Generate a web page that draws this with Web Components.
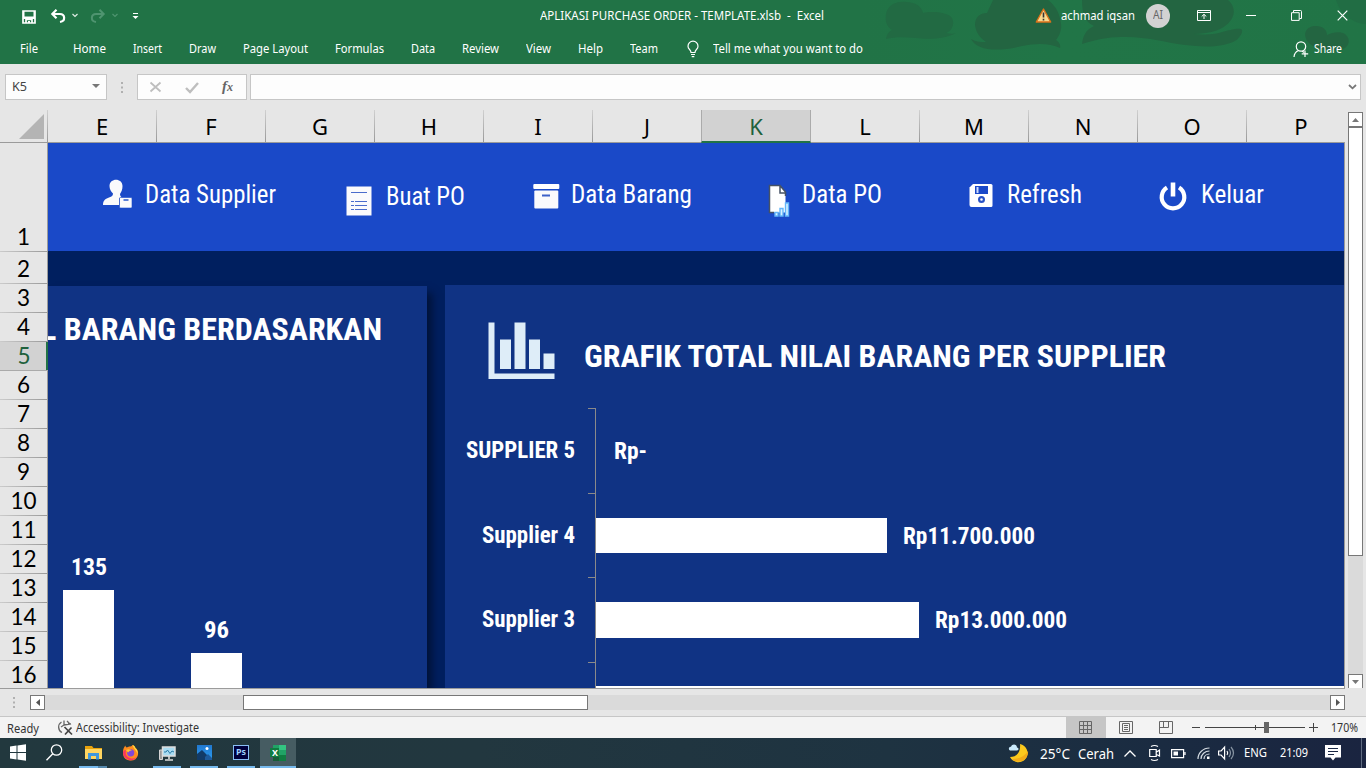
<!DOCTYPE html>
<html lang="id">
<head>
<meta charset="utf-8">
<title>APLIKASI PURCHASE ORDER - TEMPLATE.xlsb - Excel</title>
<style>
html,body{margin:0;padding:0;width:1366px;height:768px;overflow:hidden;background:#e6e6e6}
body{font-family:"Noto Sans","Open Sans",sans-serif;font-size:12px}
</style>
</head>
<body>
<excel-app></excel-app>
<script>
const make = (name, html, setup) => customElements.define(name, class extends HTMLElement {
  connectedCallback() {
    if (this.shadowRoot) return;
    const t = document.createElement('template');
    t.innerHTML = '<style>*{box-sizing:border-box}svg{display:block;overflow:visible;flex:none}</style>' + html;
    this.attachShadow({mode: 'open'}).append(t.content.cloneNode(true));
    if (setup) setup.call(this, this.shadowRoot);
  }
});

/* Single line of text condensed or widened to the width given by "w". */
make('fit-text', `<style>:host{display:block;white-space:nowrap;line-height:1.2;flex:none}
  span{display:inline-block;transform-origin:0 50%;vertical-align:top}</style><span><slot></slot></span>`,
  function (root) {
    const w = +this.getAttribute('w'), s = root.querySelector('span');
    this.style.width = w + 'px';
    s.style.transform = `scaleX(${w / s.getBoundingClientRect().width})`;
  });

/* Grid row whose column starts are listed in "cols". */
make('track-row', `<style>:host{display:grid;align-items:center;justify-items:start;height:100%}</style><slot></slot>`,
  function () {
    const c = this.getAttribute('cols').split(' ').map(Number);
    this.style.paddingLeft = c[0] + 'px';
    this.style.gridTemplateColumns = c.slice(1).map((v, i) => v - c[i] + 'px').join(' ') + ' 1fr';
  });

make('title-bar', `<style>
  :host{display:grid;grid-template-rows:31px 33px;height:64px;background:#217346;color:#fff;position:relative;overflow:hidden}
  .art{position:absolute;left:860px;top:0}
  .tabs{padding-top:3px;position:relative;height:33px}.top{position:relative}
  fit-text{font-size:12.4px}
  .top fit-text{margin-top:2px}
  .tabs fit-text{margin-top:1px}
  .av{width:24px;height:24px;border-radius:50%;background:#d2d2d2;display:grid;place-items:center;color:#666}
  .top .av fit-text{font-size:12px;margin-top:-1px}
</style>
<svg class="art" width="506" height="64" viewBox="0 0 506 64"><defs><linearGradient id="f"><stop offset="0" stop-color="#217346"/><stop offset=".4" stop-color="#217547"/><stop offset="1" stop-color="#217446"/></linearGradient></defs>
 <rect width="506" height="64" fill="url(#f)"/>
 <path d="M26 39C27 33 30 31 32 30 26 26 25 20 26 14 28 5 36 1 46 2c10 0 16 5 17 11 8-2 25-1 29 5 3 6 0 13-6 15 4 1 8 1 10 0-12 7-30 6-40 5-12-1-22-1-30 1z" fill="#226a43"/>
 <g fill="#236541"><path d="M111 39c5 3 10 3 15 3C119 37 116 32 115 25c0-8 5-12 12-12L133 0h55c8 6 12 14 13 24 1 6-2 12-5 16 3 2 5 5 4 8-10-5-24-5-38-2-24 6-45 5-51-7z"/>
 <path d="M222 0h146c6 5 8 13 3 20-6 9-20 14-38 14 12 1 22 0 26-1 10-3 18-5 22-4 3 1 0 8-6 12-14 7-32 6-50 4-22-3-40-9-64-8-14 0-26 3-39 7 1-7 3-14 12-18-9-4-12-12-12-26z"/>
 <path d="M448 42C442 34 446 26 456 26c7 0 11 4 11 9 5-3 14-4 18-1 7 6 3 13-2 15-10 3-28 1-35-7z"/></g>
 <path d="M476 0h30v24c-12 0-26-10-30-24z" fill="#216d44"/></svg>
<div class="top"><track-row cols="22 51 72 90 112 132 540 1035 1061 1146 1197 1246 1291 1337">
 <svg width="14" height="14" viewBox="0 0 14 14" style="margin-top:3px"><path d="M1 1h12v12H1z M4 13V9.500h6V13" fill="none" stroke="#fff" stroke-width="1.700"/><path d="M1 6.500h12v2.500H1zM1 1h1.500v6H1zM11.500 1H13v6h-1.500zM6 11h2v2H6z" fill="#fff"/></svg>
 <svg width="15" height="15" viewBox="0 0 15 15" style="margin-top:1px"><path d="M1 5h8c5 0 6 7 0 8M5.500.7L1.300 5l4.200 4.300" fill="none" stroke="#fff" stroke-width="2.200"/></svg>
 <svg width="6" height="5" viewBox="0 0 6 5"><path d="M.5 1L3 3.500 5.500 1" fill="none" stroke="#e0ece5" stroke-width="1.200"/></svg>
 <svg width="15" height="15" viewBox="0 0 15 15" style="margin-top:1px"><path d="M14 5H6C1 5 0 12 6 13M9.500.7L13.700 5 9.500 9.300" fill="none" stroke="#4f9470" stroke-width="2"/></svg>
 <svg width="6" height="5" viewBox="0 0 6 5"><path d="M.5 1L3 3.500 5.500 1" fill="none" stroke="#4f9470" stroke-width="1.200"/></svg>
 <svg width="7" height="7" viewBox="0 0 7 7" style="margin-top:2px"><path d="M1 .5h5" stroke="#fff"/><path d="M.5 3h6L3.500 6z" fill="#fff"/></svg>
 <fit-text w="284" style="white-space:pre">APLIKASI PURCHASE ORDER - TEMPLATE.xlsb  -  Excel</fit-text>
 <svg width="17" height="15" viewBox="0 0 17 15"><path d="M8.500 1L15.700 14H1.300z" fill="#f9d98e" stroke="#d9701a" stroke-width="1.400" stroke-linejoin="round"/><path d="M8.500 4.500v5M8.500 10.800v1.700" stroke="#333" stroke-width="1.600"/></svg>
 <fit-text w="74">achmad iqsan</fit-text>
 <div class="av"><fit-text w="10">AI</fit-text></div>
 <svg width="14" height="11" viewBox="0 0 14 11"><path d="M.5.5h13v10H.5zM.5 2.500h13M7 9V4.500M4.700 6.500L7 4.300l2.300 2.200" fill="none" stroke="#fff"/></svg>
 <svg width="10" height="3" style="margin-top:-1px"><path d="M0 1.500h10" stroke="#fff"/></svg>
 <svg width="11" height="11" viewBox="0 0 11 11"><path d="M.5 2.700h7.700v7.700H.5zM2.500 2.500v-2h7q1 0 1 1v7h-2" fill="none" stroke="#fff"/></svg>
 <svg width="11" height="11" viewBox="0 0 11 11"><path d="M.7.7l9.600 9.600M10.300.7L.7 10.300" stroke="#fff" stroke-width="1.200"/></svg>
</track-row></div>
<div class="tabs"><track-row cols="20 73 133 189 243 335 411 462 526 578 630 687 713 1293 1314">
 <fit-text w="18">File</fit-text><fit-text w="33">Home</fit-text><fit-text w="29">Insert</fit-text><fit-text w="27">Draw</fit-text><fit-text w="65">Page Layout</fit-text><fit-text w="49">Formulas</fit-text><fit-text w="24">Data</fit-text><fit-text w="37">Review</fit-text><fit-text w="25">View</fit-text><fit-text w="25">Help</fit-text><fit-text w="28">Team</fit-text>
 <svg width="12" height="17" viewBox="0 0 12 17"><path d="M4 11.500C4 8.500 1 8.500 1 5.200a5 5 0 0 1 10 0C11 8.500 8 8.500 8 11.500zM4 13.500h4M4.700 15.700h2.600" fill="none" stroke="#fff" stroke-width="1.200"/></svg>
 <fit-text w="150">Tell me what you want to do</fit-text>
 <svg width="16" height="17" viewBox="0 0 16 17"><circle cx="8" cy="5.500" r="4.700" fill="none" stroke="#fff" stroke-width="1.200"/><path d="M1 16c.3-4 2-5.500 4.500-6.500M9 10l2 1.500M12 9.500v6.500M8.700 12.800h6.500" fill="none" stroke="#fff" stroke-width="1.200"/></svg>
 <fit-text w="28">Share</fit-text>
</track-row></div>`);

make('formula-bar', `<style>
  :host{display:grid;grid-template-columns:102px 30px 110px 3px 1111px;padding:10px 5px;height:46px;background:#e6e6e6}
  .b{background:#fdfdfd;border:1px solid #c6c6c6;height:26px}
  .n{display:flex;align-items:center;justify-content:space-between;padding:0 6px;color:#444}
  .d{display:grid;place-items:center}
  .i{font:italic bold 15px "Liberation Serif",serif;color:#666;margin-top:-2px}
  .i span{font-size:12px}
  .e{display:flex;align-items:center;justify-content:flex-end;padding-right:3px}
</style>
<div class="b n"><fit-text w="15" style="font-size:12.4px;margin-top:1px">K5</fit-text><svg width="8" height="4" style="margin-top:-2px"><path d="M0 0h8L4 4z" fill="#777"/></svg></div>
<div class="d"><svg width="2" height="11"><path d="M0 0h2v2H0zM0 4.500h2v2H0zM0 9h2v2H0z" fill="#b0b0b0"/></svg></div>
<div class="b"><track-row cols="12 47 84"><svg width="11" height="10" viewBox="0 0 11 10"><path d="M.5.5l10 9M10.500.5l-10 9" stroke="#bebebe" stroke-width="1.800"/></svg><svg width="14" height="11" viewBox="0 0 14 11"><path d="M1 6l4 4L13 1" fill="none" stroke="#bebebe" stroke-width="2.400"/></svg><fit-text class="i" w="11">f<span>x</span></fit-text></track-row></div>
<div></div>
<div class="b e"><svg width="9" height="6" viewBox="0 0 9 6"><path d="M1 1l3.500 3.300L8 1" fill="none" stroke="#777" stroke-width="1.800"/></svg></div>`);

make('column-headers', `<style>
  :host{display:grid;grid-template-columns:47px repeat(12,109px);height:33px;overflow:hidden;font:22px "Noto Sans",sans-serif;color:#000;background:linear-gradient(#9b9b9b,#9b9b9b) 0 100%/100% 1px no-repeat #e6e6e6}
  .h{display:grid;place-items:center;height:32px;line-height:1;padding:0 0 1px 1px;background:linear-gradient(#d0d0d0,#999) 0 0/1px 100% no-repeat}
  .s{background:#d2d2d2;color:#1e613c;border:1px solid #ababab;border-width:0 1px;height:33px;border-bottom:2px solid #217346;width:110px;padding:0}
  .s+.h{background:none}
  .c{padding:4px 0 0 19px}
</style><div class="c"><svg width="25" height="25"><path d="M25 0v25H0z" fill="#b4b4b4"/></svg></div>`,
  function (root) {
    for (const l of 'EFGHIJKLMNOP') {
      const d = document.createElement('div');
      d.className = l === 'K' ? 'h s' : 'h';
      d.textContent = l;
      root.append(d);
    }
  });

make('row-headers', `<style>
  :host{display:grid;grid-template-rows:109px 32px repeat(14,29px);width:48px;height:545px;overflow:hidden;background:linear-gradient(#9b9b9b,#9b9b9b) 100% 0/1px 100% no-repeat #e6e6e6;font:22.500px Lato,"Noto Sans",sans-serif;color:#000}
  .r{display:flex;align-items:flex-end;justify-content:center;line-height:29px;border-bottom:1px solid;border-image:linear-gradient(90deg,#ccc,#999) 1;width:47px;height:100%;min-height:0}
  .r span{height:29px}
  .s{background:linear-gradient(#217346,#217346) 100% 0/2px 100% no-repeat #d2d2d2;color:#1e613c;border-image:none;border-color:#aaa;width:48px}
</style>`, function (root) {
    for (let i = 1; i < 17; i++) {
      const d = document.createElement('div');
      d.className = i === 5 ? 'r s' : 'r';
      d.innerHTML = `<span>${i}</span>`;
      root.append(d);
    }
  });

make('menu-strip', `<style>:host{display:block;height:108px;background:#1a49c8;color:#fff;font:25px Roboto,sans-serif;font-stretch:75%;overflow:hidden}
  fit-text{margin:-4px 0 0 -1px}</style>
<track-row cols="55 98 298 339 484 524 720 755 921 960 1111 1154">
 <svg width="30" height="30" viewBox="0 0 30 30" style="margin-top:-6px"><path d="M6.500 7C6.500-1.500 19.500-1.500 19.500 7c0 4-1 5.500-2.500 8 0 2 1 3 2 3.500L16 19v7H0c0-5 3-6.500 6-7.500 3-1 4-2 4-4C8 12.500 6.500 10 6.500 7z" fill="#fafafc"/><rect x="16.500" y="18.500" width="12.500" height="10.500" rx="1" fill="#fafafc" stroke="#1a49c8" stroke-width=".6"/><path d="M20.500 21h5" stroke="#5c80d8" stroke-width="2"/></svg>
 <fit-text w="131">Data Supplier</fit-text>
 <svg width="26" height="30" viewBox="0 0 26 30" style="margin-top:8px"><path d="M.5.5h25v29H.5z" fill="#fafafc"/><path d="M5 6.500h16M9 15.500h12M9 19.500h12M9 23.500h12M5 15.500h3M5 19.500h3M5 23.500h3" stroke="#4a6ccc" stroke-width="1.200"/></svg>
 <fit-text w="79" style="margin-top:0">Buat PO</fit-text>
 <svg width="27" height="25" viewBox="0 0 27 25" style="margin-top:-1px;margin-left:1px"><rect x=".3" width="26" height="5" rx="1" fill="#fff"/><rect x="1.300" y="6.500" width="24" height="18" rx="1" fill="#fafafc"/><path d="M9 11.500h8" stroke="#3d61c8" stroke-width="2"/></svg>
 <fit-text w="121">Data Barang</fit-text>
 <svg width="22" height="33" viewBox="0 0 22 33" style="margin-top:6px"><path d="M1.500 1.500H12l5.500 6.500v20.500h-16z" fill="#fff"/><path d="M1.500 29V1.500H12l5.500 6.500v4M12 1.500V9h6M1 28.500h5" fill="none" stroke="#455265" stroke-width="1.500"/><g fill="#d8f0ff" stroke="#63b6fa" stroke-width="1.400"><path d="M7 28.500h3v3.500H7zM12 24.500h3V32h-3zM17.500 19h3v13h-3z"/></g></svg>
 <fit-text w="80">Data PO</fit-text>
 <svg width="25" height="25" viewBox="0 0 25 25" style="margin-top:-3px"><path d="M4 1h18q1.500 0 1.500 1.500v20Q23.500 24 22 24H2.500Q.500 24 .500 22V4.500z" fill="#fff"/><path d="M6 3h13v8H6z" fill="#1a49c8"/><path d="M8.500 4v6" stroke="#cfdcff" stroke-width="2"/><circle cx="12.500" cy="16.500" r="2.400" fill="none" stroke="#2852c5" stroke-width="2.200"/></svg>
 <fit-text w="75">Refresh</fit-text>
 <svg width="28" height="28" viewBox="0 0 28 28" style="margin-top:-2px"><path d="M8 5.500A11.300 11.300 0 1 0 20 5.500" fill="none" stroke="#fff" stroke-width="4.200"/><path d="M14 .5v14" stroke="#fff" stroke-width="4.600"/></svg>
 <fit-text w="63">Keluar</fit-text>
</track-row>`);

make('column-chart', `<style>
  :host{display:grid;grid-template-rows:86px 1fr;width:379px;height:402px;background:#103384;box-shadow:6px 6px 8px -1px #001238;color:#fff;font-family:Roboto,sans-serif;font-weight:700;font-stretch:75%}
  .t{height:86px;padding:24px 0 0;margin-left:-7px;font-size:32px}
  .p{display:flex;align-items:flex-end;gap:77px;padding-left:15px}
  .c{width:51px;display:flex;flex-direction:column;align-items:center;gap:8px;font-size:24px}
  .c i{width:51px;background:#fff}
</style><div class="t"><fit-text w="341">L BARANG BERDASARKAN</fit-text></div>
<div class="p"><div class="c"><fit-text w="36">135</fit-text><i style="height:98px"></i></div>
<div class="c"><fit-text w="25">96</fit-text><i style="height:35px"></i></div></div>`);

make('supplier-chart', `<style>
  :host{display:grid;grid-template-rows:123px 85px 84px 85px 26px;width:899px;height:403px;overflow:hidden;background:#103384;color:#fff;font-family:Roboto,sans-serif;font-weight:700;font-stretch:75%;font-size:24px}
  .t{display:flex;gap:29px;padding:37px 0 0 43px;font-size:32px}
  .r{display:grid;grid-template-columns:130px 13px 7px 1fr;align-items:stretch}
  .l{display:flex;align-items:center;justify-content:flex-end}
  .k{border-top:1px solid #8a8a8a}
  .v{border-left:1px solid #8a8a8a;display:flex;align-items:center}
  .v i{background:#fff}
</style>
<div class="t"><svg width="67" height="57" viewBox="0 0 67 57"><path d="M.5.500h6v51h60V57H.500zM12 17.500h11v29.500H12zM26.500.500h11V47h-11zM41 17.500h11V47H41zM55.500 31.500h11V47h-11z" fill="#deedf8"/></svg><fit-text w="582" style="margin-top:15px">GRAFIK TOTAL NILAI BARANG PER SUPPLIER</fit-text></div>
<div class="r"><div class="l"><fit-text w="109">SUPPLIER 5</fit-text></div><b></b><div class="k"></div><div class="v"><fit-text w="33" style="margin:1px 0 0 18px">Rp-</fit-text></div></div>
<div class="r"><div class="l"><fit-text w="93">Supplier 4</fit-text></div><b></b><div class="k"></div><div class="v"><i style="width:291px;height:35px"></i><fit-text w="132" style="margin:2px 0 0 16px">Rp11.700.000</fit-text></div></div>
<div class="r"><div class="l"><fit-text w="93">Supplier 3</fit-text></div><b></b><div class="k"></div><div class="v"><i style="width:323px;height:36px"></i><fit-text w="132" style="margin:2px 0 0 16px">Rp13.000.000</fit-text></div></div>
<div class="r"><b></b><b></b><div class="k"></div><div class="v"><i style="width:748px;height:2px;align-self:flex-end"></i></div></div>`);

make('work-sheet', `<style>
  :host{display:grid;grid-template-rows:33px 545px;grid-template-columns:1344px 22px;height:578px}
  .body{display:grid;grid-template-columns:48px 1296px}
  .view{overflow:hidden;background:#001f5f;height:545px}
  .p{display:flex;gap:18px;align-items:flex-end;height:437px}
  .sb{grid-area:1/2/3/3;display:grid;grid-template-columns:15px;grid-template-rows:15px 429px 118px 15px;padding:2px 3px 0 4px;background:linear-gradient(#9b9b9b,#9b9b9b) 0 32px/1px 100% no-repeat #e6e6e6;height:578px}
  .b{border:1px solid #777;background:#fff;display:grid;place-items:center}
  .th{border:1px solid #777;background:#fff}.tr{background:#dadada}
</style>
<column-headers></column-headers>
<div class="sb"><div class="b"><svg width="7" height="4"><path d="M0 4h7L3.500 0z" fill="#777"/></svg></div><div class="th"></div><div class="tr"></div><div class="b"><svg width="7" height="4"><path d="M0 0h7L3.500 4z" fill="#777"/></svg></div></div>
<div class="body"><row-headers></row-headers><div class="view"><menu-strip></menu-strip><div class="p"><column-chart></column-chart><supplier-chart></supplier-chart></div></div></div>`);

make('h-scroll', `<style>
  :host{display:grid;grid-template-columns:28px 15px 198px 345px 742px 15px;padding:6px 0 0 2px;height:29px;box-sizing:border-box;border-bottom:1px solid #c6c6c6;background:linear-gradient(#9b9b9b,#9b9b9b) 0 0/1345px 1px no-repeat #e6e6e6;padding-top:7px}
  div{height:15px}.b{border:1px solid #777;background:#fff;display:grid;place-items:center}.t{background:#dadada}.d{display:grid;place-items:center;padding-right:5px}
</style><div class="d"><svg width="2" height="11"><path d="M0 0h2v2H0zM0 4.500h2v2H0zM0 9h2v2H0z" fill="#b0b0b0"/></svg></div>
<div class="b"><svg width="4" height="7"><path d="M4 0v7L0 3.500z" fill="#555"/></svg></div><div class="t"></div><div class="b"></div><div class="t"></div><div class="b"><svg width="4" height="7"><path d="M0 0v7l4-3.500z" fill="#555"/></svg></div>`);

make('status-bar', `<style>:host{display:block;height:21px;background:#f3f3f3;color:#333}
  fit-text{font-size:11.800px}.s{width:40px;height:21px;background:#c6c6c6;display:grid;place-items:center}</style>
<track-row cols="7 57 76 1066 1119 1159 1192 1205 1309 1331">
<fit-text w="32" style="margin-top:1px">Ready</fit-text>
<svg width="16" height="15" viewBox="0 0 16 15"><path d="M4.500 2A6 6 0 0 0 5 12.500M7 .5v4.500M10 1l3 3-6 1M7 5l-3 2M14 4h-3" fill="none" stroke="#666" stroke-width="1.300"/><path d="M7.500 7l7.500 7.500M14.500 7.500L8 14.500" stroke="#444" stroke-width="1.700"/></svg>
<fit-text w="123" style="margin-top:-1px">Accessibility: Investigate</fit-text>
<div class="s"><svg width="13" height="13" style="margin:-1px 0 0 -1px"><path d="M.5.5h12v12H.5zM4.500.500v12M8.500.500v12M.500 4.500h12M.500 8.500h12" fill="none" stroke="#666"/></svg></div>
<svg width="14" height="13" style="margin-top:-1px"><path d="M.5.500h13v12H.500zM3.500 2.500h7v8h-7zM5 4.500h4M5 6.500h4M5 8.500h4" fill="none" stroke="#666"/></svg>
<svg width="14" height="13" style="margin-top:-1px"><path d="M.5.500h13v12H.500zM4.500.500v6M9.500.500v6M.500 6.500h9" fill="none" stroke="#666"/></svg>
<svg width="8" height="3" style="margin-top:-1px"><path d="M0 1.500h8" stroke="#444"/></svg>
<svg width="100" height="11"><path d="M0 5.500h100M50.500 3v5" stroke="#444"/><path d="M59 0h5v11h-5z" fill="#666"/></svg>
<svg width="9" height="9" style="margin-top:-1px"><path d="M0 4.500h9M4.500 0v9" stroke="#444"/></svg>
<fit-text w="27">170%</fit-text></track-row>`);

make('task-button', `<style>:host{display:grid;grid-template-rows:28px 2px;width:36px;height:30px}:host([active]){background:#465c62}
 div{display:grid;place-items:center}i{display:block;margin:0 4px}:host([open]) i{background:#76b9ed}:host([active]) i{margin:0}:host([multi]) i{background:linear-gradient(90deg,#76b9ed 19px,#5689ad 19px)}</style><div><slot></slot></div><i></i>`);

make('task-bar', `<style>
  :host{display:grid;grid-template-columns:333px 1fr;height:30px;color:#fff;background:linear-gradient(90deg,#22383e,#22373f 35%,#1e3341 65%,#1a2b41 85%,#1a2440)}
  .l{display:grid;grid-template-columns:38px repeat(8,37px)}
  fit-text{font-size:14px}.sm{font-size:12.800px;margin-top:-1px}
</style>
<div class="l">
<task-button><svg width="16" height="17" viewBox="0 0 16 17"><path d="M0 2.500L6.500 1.600V8H0zM7.500 1.400L16 .2V8H7.500zM0 9h6.500v6.400L0 14.500zM7.500 9H16v7.800l-8.500-1.200z" fill="#fff"/></svg></task-button>
<task-button><svg width="17" height="17" viewBox="0 0 17 17" style="margin-right:3px"><circle cx="10.500" cy="6" r="5.200" fill="none" stroke="#fff" stroke-width="1.300"/><path d="M6.800 9.800L.5 16.300" stroke="#fff" stroke-width="1.400"/></svg></task-button>
<task-button open multi><svg width="17" height="15" viewBox="0 0 17 15" style="margin-top:1px"><path d="M0 1h7l1.500 2H17v11H0z" fill="#e8a30d"/><path d="M0 4h17v10H0z" fill="#ffd560"/><path d="M3 14.500V8h11v6.500h-3V11H6v3.500z" fill="#3f97dd"/></svg></task-button>
<task-button><svg width="17" height="17" viewBox="0 0 17 17" style="margin-top:1px"><path d="M1 8C1 5 2 3 3.500 1.500c0 1 .5 2 1.500 2C7 2 10 3 10.500 1c2 .5 2.500 2 3 3 2 1 3 4 2.500 7A7.700 7.700 0 0 1 1 10z" fill="#ff8a1e"/><path d="M1 9a7.700 7.700 0 0 0 15 2c-1 3-5 4.500-8 3-3-1-5-3-4-8-2 0-3 1-3 3z" fill="#f8375e"/><path d="M10.500 1c2 .5 2.500 2 3 3 2 2 2.500 4 2 6-1-4-4-5-5-9z" fill="#ffd93d"/><circle cx="8.700" cy="8.800" r="3.600" fill="#8147d8"/><path d="M4 6c2-1 4-1 6 .5-3 0-3 1.500-4 2z" fill="#ffc42e"/></svg></task-button>
<task-button open><svg width="17" height="15" viewBox="0 0 17 15" style="margin-top:2px"><path d="M.5 4h3v9.500h-3z" fill="#999" stroke="#d5d5d5"/><path d="M3.500 1h12.500v9H3.500z" fill="#a9dcf2" stroke="#ddd" stroke-width="1.500"/><path d="M5 6h2l1.500-2 2.500 3.500L13 5l2 1" fill="none" stroke="#2c7ca8"/><path d="M6 14h8M10 10v3" stroke="#ddd" stroke-width="1.600"/></svg></task-button>
<task-button open><svg width="15" height="15" viewBox="0 0 15 15"><defs><linearGradient id="p" x2="0" y2="1"><stop stop-color="#2178cf"/><stop offset="1" stop-color="#2c9df1"/></linearGradient></defs><path d="M0 0h15v15H0z" fill="url(#p)"/><path d="M0 9l5-4 10 10H0z" fill="#123b68"/><path d="M8 12l3-3 4 4v2H8z" fill="#1d5a9c"/><circle cx="10" cy="3.500" r="1.500" fill="#fff"/></svg></task-button>
<task-button open><div style="width:16px;height:15px;box-sizing:border-box;background:#00003d;border:1px solid #89bef5;color:#9bcfff;display:grid;place-items:center"><fit-text w="10" style="font-size:9px;font-weight:700">Ps</fit-text></div></task-button>
<task-button active open><div style="box-sizing:border-box;width:16px;height:16px;margin-top:1px;display:grid;align-items:center;background:linear-gradient(90deg,transparent 3px,#21a366 3px 9px,#33c481 9px) 0 0/100% 5px no-repeat,linear-gradient(90deg,transparent 3px,#107c41 3px 9px,#21a366 9px) 0 5px/100% 5px no-repeat,linear-gradient(90deg,transparent 3px,#185c37 3px 9px,#107c41 9px) 0 10px/100% 6px no-repeat"><div style="width:9px;height:9px;background:#107c41;display:grid;place-items:center"><fit-text w="6" style="font-size:8px;font-weight:700;color:#fff">X</fit-text></div></div></task-button>
</div>
<track-row cols="676 706 745 791 816 837 864 885 911 947 992 1028">
<svg width="20" height="19" viewBox="0 0 20 19"><path d="M11 0a9.200 9.200 0 1 1-10 13c6 0 11-4 10-13z" fill="#fbc91d"/><path d="M19 7c1 9-10 14-16 8 8 0 13-3 16-8z" fill="#f2ab18"/><path d="M1 6.500a2 2 0 0 1 1-3.800C3-.5 8 0 8 3.500c2 0 2 3 0 3z" fill="#c9e9fb"/></svg>
<fit-text w="30" style="margin:2px 0 0 1px">25°C</fit-text><fit-text w="36" style="margin-top:2px">Cerah</fit-text>
<svg width="12" height="7"><path d="M.5 6.500L6 1l5.500 5.500" fill="none" stroke="#fff" stroke-width="1.300"/></svg>
<svg width="11" height="16"><path d="M2 1.500q3.500-2 7 0M2 14.500q3.500 2 7 0M.700 4.500h6.500v7H.700zM7.500 7L10.500 5v6L7.500 9.500" fill="none" stroke="#fff" stroke-width="1.200"/></svg>
<svg width="15" height="9" style="margin-left:1px"><path d="M.6.600h12v8H.600zM14 3v3" fill="none" stroke="#fff" stroke-width="1.200"/><path d="M2.500 2.500h4.500v4H2.500z" fill="#fff"/></svg>
<svg width="13" height="13" viewBox="0 0 13 13"><path d="M1 12C1 6 6 1 12.500 1M4 12c0-4.500 4-8 8.500-8M7 12c0-3 2.500-5 5.500-5" fill="none" stroke="#d5dce2" stroke-width="1.200"/><path d="M10 9.500h2.500V12H10z" fill="#fff"/></svg>
<svg width="16" height="14" viewBox="0 0 16 14"><path d="M.6 5h2.500l3.500-4v12l-3.500-4H.600z" fill="none" stroke="#fff" stroke-width="1.200"/><path d="M9 5q1.500 2 0 4" fill="none" stroke="#fff" stroke-width="1.200"/><path d="M11 3q3 4 0 8M13 1q5 6 0 12" fill="none" stroke="#8794a2" stroke-width="1.200"/></svg>
<fit-text class="sm" w="23">ENG</fit-text><fit-text class="sm" w="28">21:09</fit-text>
<svg width="17" height="16"><path d="M0 0h16v12.500h-5.500L8 15.500l-2.500-3H0z" fill="#fff"/><path d="M3 3.500h10M3 6.500h10M3 9.500h6" stroke="#1a2744"/></svg>
<svg width="1" height="30"><path d="M.5 0v30" stroke="#5f6b80"/></svg>
</track-row>`);

make('excel-app', `<style>:host{display:grid;grid-template-rows:64px 46px 578px 29px 21px 30px;width:1366px;height:768px;overflow:hidden}</style>
<title-bar></title-bar><formula-bar></formula-bar><work-sheet></work-sheet><h-scroll></h-scroll><status-bar></status-bar><task-bar></task-bar>`);
</script>
</body>
</html>
